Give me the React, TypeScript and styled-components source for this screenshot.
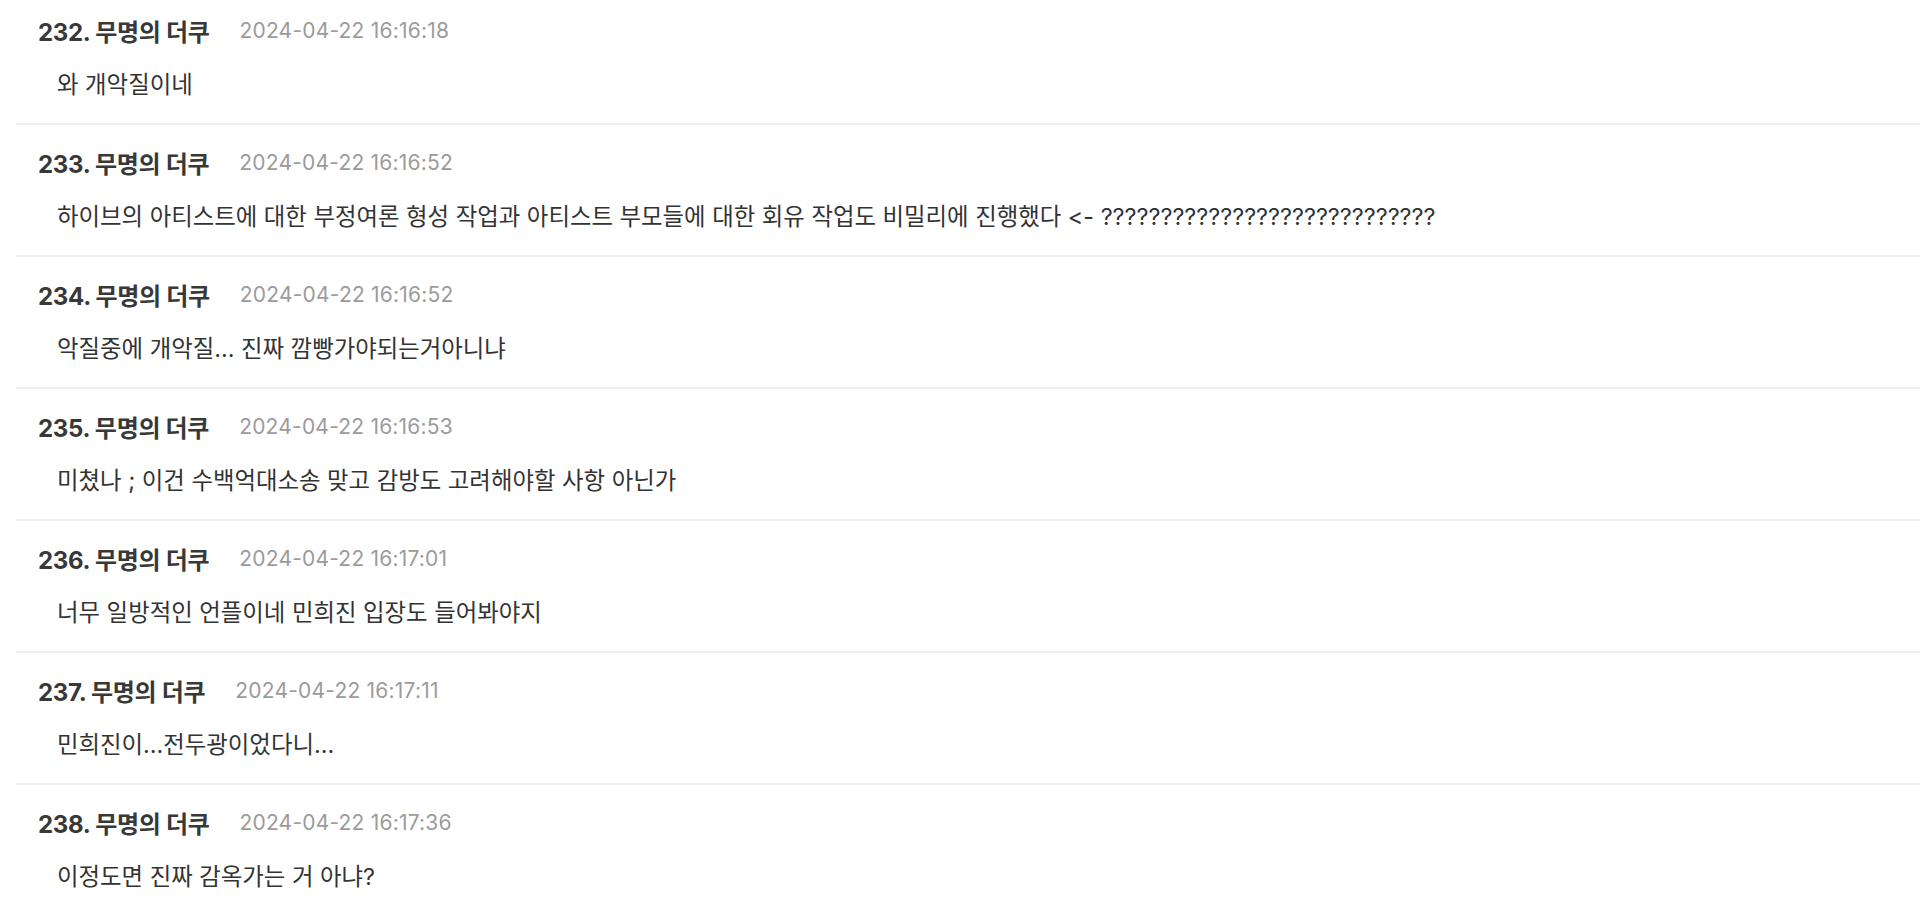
import React from "react";
import styled, { createGlobalStyle } from "styled-components";

const GlobalStyle = createGlobalStyle`
  html, body {
    margin: 0;
    padding: 0;
    background: #ffffff;
    overflow: hidden;
  }
  body {
    font-family: "Inter", "Noto Sans CJK KR", sans-serif;
    color: #333333;
  }
`;

const Page = styled.div`
  width: 1920px;
  height: 898px;
  overflow: hidden;
  background: #ffffff;
`;

const List = styled.ul`
  list-style: none;
  margin: -7px 0 0 16px;
  padding: 0;
`;

const Item = styled.li`
  height: 132px;
  box-sizing: border-box;
  padding-top: 22px;
  border-bottom: 2px solid #efefef;
  display: flex;
  flex-direction: column;
`;

const Header = styled.div`
  display: flex;
  align-items: center;
  height: 30px;
  padding-left: 22px;
`;

const Name = styled.span`
  font-family: "Inter", "Noto Sans CJK KR", sans-serif;
  font-weight: 700;
  font-size: 24px;
  color: #383838;
  letter-spacing: -0.3px;
`;

const DateText = styled.span`
  margin-left: 30px;
  font-family: "Inter", "Noto Sans CJK KR", sans-serif;
  font-size: 21px;
  color: #9b9b9b;
  letter-spacing: 0.2px;
`;

const Body = styled.div`
  margin-top: 25px;
  padding-left: 41px;
  height: 30px;
  line-height: 30px;
  font-size: 23.4px;
  color: #333333;
  white-space: nowrap;
`;

type Comment = { no: number; date: string; text: string };

const comments: Comment[] = [
  { no: 232, date: "2024-04-22 16:16:18", text: "와 개악질이네" },
  {
    no: 233,
    date: "2024-04-22 16:16:52",
    text:
      "하이브의 아티스트에 대한 부정여론 형성 작업과 아티스트 부모들에 대한 회유 작업도 비밀리에 진행했다 <- ????????????????????????????",
  },
  { no: 234, date: "2024-04-22 16:16:52", text: "악질중에 개악질... 진짜 깜빵가야되는거아니냐" },
  { no: 235, date: "2024-04-22 16:16:53", text: "미쳤나 ; 이건 수백억대소송 맞고 감방도 고려해야할 사항 아닌가" },
  { no: 236, date: "2024-04-22 16:17:01", text: "너무 일방적인 언플이네 민희진 입장도 들어봐야지" },
  { no: 237, date: "2024-04-22 16:17:11", text: "민희진이...전두광이었다니..." },
  { no: 238, date: "2024-04-22 16:17:36", text: "이정도면 진짜 감옥가는 거 아냐?" },
];

export default function App() {
  return (
    <Page>
      <GlobalStyle />
      <List>
        {comments.map((c) => (
          <Item key={c.no}>
            <Header>
              <Name>{c.no}. 무명의 더쿠</Name>
              <DateText>{c.date}</DateText>
            </Header>
            <Body>{c.text}</Body>
          </Item>
        ))}
      </List>
    </Page>
  );
}
